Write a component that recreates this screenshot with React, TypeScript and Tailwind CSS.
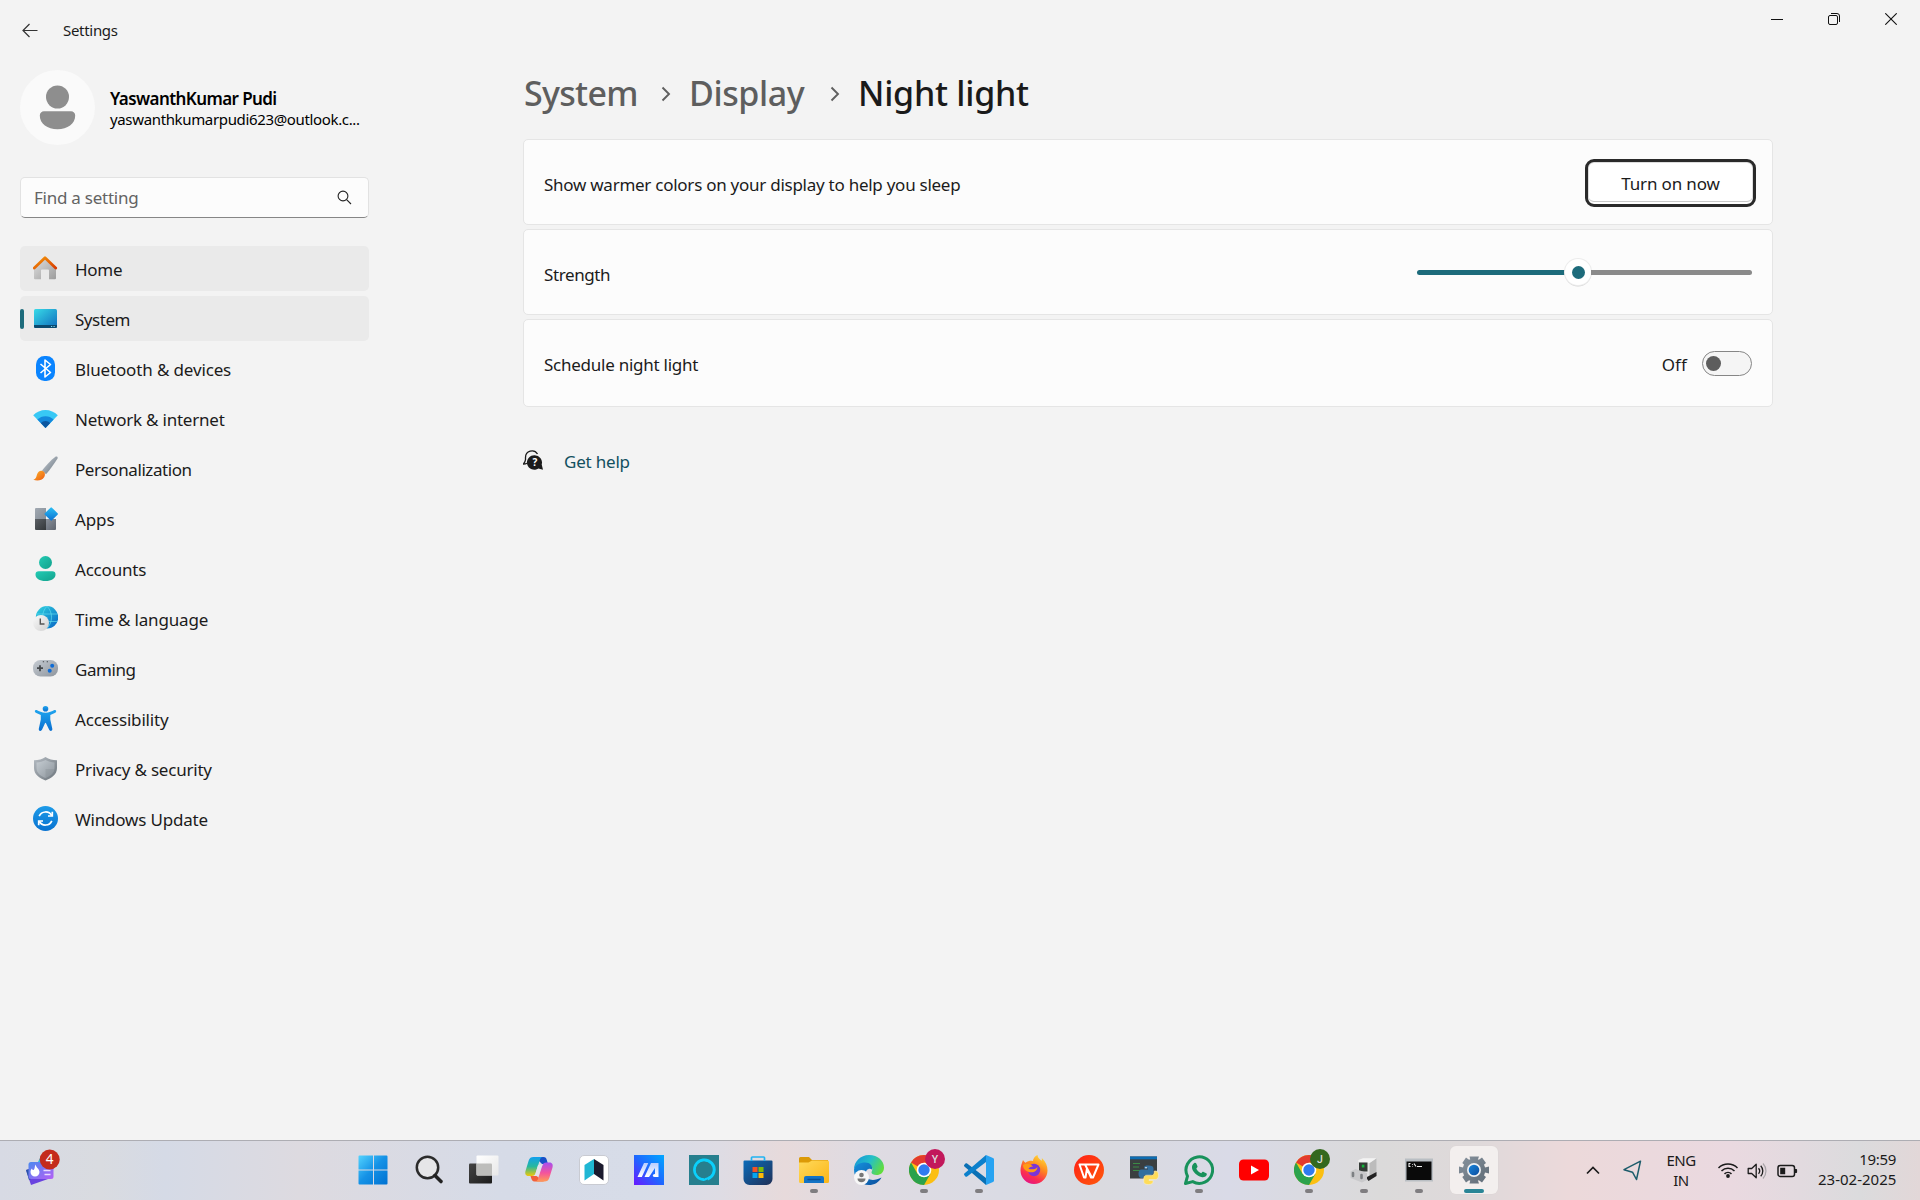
import type { ReactNode } from "react";

function Svg({ w = 25, h = 25, children, className = "" }: { w?: number; h?: number; children: ReactNode; className?: string }) {
  return (
    <svg width={w} height={h} viewBox={`0 0 ${w} ${h}`} fill="none" className={`shrink-0 ${className}`}>
      {children}
    </svg>
  );
}

function Gradient({ id, from, to, x2 = 1, y2 = 1 }: { id: string; from: string; to: string; x2?: number; y2?: number }) {
  return (
    <linearGradient id={id} x1="0" y1="0" x2={x2} y2={y2}>
      <stop stopColor={from} />
      <stop offset="1" stopColor={to} />
    </linearGradient>
  );
}

/* ---------- Navigation icons, all on a 25 x 25 grid ---------- */

const HomeIcon = () => (
  <Svg>
    <defs>
      <Gradient id="homeWall" from="#e0e0e0" to="#9c9c9c" />
      <Gradient id="homeRoof" from="#f59a0b" to="#d83b01" />
    </defs>
    <path d="M1 11.500 12 2l11 9.500V22.300a1 1 0 0 1-1 1h-6V14.500a1 1 0 0 0-1-1H9a1 1 0 0 0-1 1v8.800H2a1 1 0 0 1-1-1Z" fill="url(#homeWall)" />
    <path d="M1.300 12 12 1.700 22.700 12" stroke="url(#homeRoof)" strokeWidth="2.800" strokeLinecap="round" strokeLinejoin="round" />
  </Svg>
);

const SystemIcon = () => (
  <Svg>
    <defs><Gradient id="sys" from="#38dbe8" to="#0f6cbd" /></defs>
    <rect x="1" y="3" width="23" height="19" rx="1.500" fill="url(#sys)" />
    <path d="M1 19h23v1.500a1.500 1.500 0 0 1-1.500 1.500h-20A1.500 1.500 0 0 1 1 20.500Z" fill="#0b4a6f" />
    <path d="M18 20.500h1.200M20.500 20.500h1.200" stroke="#7fd6ef" strokeWidth="1" />
  </Svg>
);

const BluetoothIcon = () => (
  <Svg>
    <rect x="3" y="0" width="19" height="25" rx="8.500" fill="#0a84ff" />
    <path d="m7.500 8 10 8.500-5.500 4.500V4l5.500 4.500-10 8.500" stroke="#fff" strokeWidth="1.600" strokeLinejoin="round" />
  </Svg>
);

const NetworkIcon = () => (
  <Svg>
    <path d="M12.500 22 .2 9.200a17.400 17.400 0 0 1 24.600 0Z" fill="#38c8f5" />
    <path d="M12.500 22 4.400 13.500a11.500 11.500 0 0 1 16.200 0Z" fill="#1488dc" />
    <path d="M12.500 22 7.800 17.100a6.500 6.500 0 0 1 9.400 0Z" fill="#0b569f" />
  </Svg>
);

const BrushIcon = () => (
  <Svg>
    <defs>
      <Gradient id="handle" from="#c9d0d8" to="#66717b" />
      <Gradient id="bristle" from="#fcb52b" to="#ed5a12" />
    </defs>
    <path d="M9 14.500C13 9.500 18 4 22.400.700c1.500-.9 2.900.4 2 2C21 8 17 13.500 13 18.300Z" fill="url(#handle)" />
    <path d="M.3 23.800C3 22.800 3.300 21 4 18.500c.9-2.700 3-4.200 5.500-3.500 2.700.8 3 4 1.600 6.300C9 25 3.500 25.200.3 23.800Z" fill="url(#bristle)" />
  </Svg>
);

const AppsIcon = () => (
  <Svg>
    <defs>
      <Gradient id="appA" from="#a1a9b2" to="#858d96" />
      <Gradient id="appB" from="#5b6065" to="#33373a" />
      <Gradient id="appC" from="#8a919b" to="#5f656f" />
      <Gradient id="appD" from="#2bc0f5" to="#0a6fd0" />
    </defs>
    <path d="M2 3a1 1 0 0 1 1-1h10v11H2Z" fill="url(#appA)" />
    <path d="M2 13h11v11H3a1 1 0 0 1-1-1Z" fill="url(#appB)" />
    <path d="M13 13h10v10a1 1 0 0 1-1 1h-9Z" fill="url(#appC)" />
    <rect x="13.200" y="3" width="10" height="10" rx="1" transform="rotate(45 18.200 8)" fill="url(#appD)" />
  </Svg>
);

const AccountsIcon = () => (
  <Svg>
    <defs><Gradient id="acc" from="#23cbb4" to="#12a18c" /></defs>
    <circle cx="12.500" cy="6.500" r="6.500" fill="url(#acc)" />
    <path d="M2.500 18.500a3.300 3.300 0 0 1 3.300-3.300h13.400a3.300 3.300 0 0 1 3.300 3.300c0 4-4 6.500-10 6.500s-10-2.500-10-6.500Z" fill="url(#acc)" />
  </Svg>
);

const TimeIcon = () => (
  <Svg>
    <defs>
      <Gradient id="globe" from="#31d5e0" to="#0763c4" />
      <Gradient id="clock" from="#fafafa" to="#d0d0d0" />
    </defs>
    <circle cx="14" cy="11.300" r="11.200" fill="url(#globe)" />
    <path d="M3.500 8h21M3.500 15.500h21M14 .2c-6 6-6 16 0 22.200M14 .2c6 6 6 16 0 22.200" stroke="#65dff0" strokeWidth="1" opacity=".65" />
    <circle cx="8" cy="17" r="8" fill="url(#clock)" />
    <path d="M7.300 12.500V18H11.500" stroke="#555" strokeWidth="1.400" />
  </Svg>
);

const GamingIcon = () => (
  <Svg>
    <defs><Gradient id="pad" from="#c6ccd3" to="#8e959d" /></defs>
    <rect x="0" y="4" width="25" height="16.500" rx="7.500" fill="url(#pad)" />
    <path d="M7 9.200v6M4 12.200h6" stroke="#44484c" strokeWidth="1.800" />
    <circle cx="19.200" cy="9.700" r="2" fill="#0f6cd6" />
    <circle cx="16.700" cy="14.700" r="2" fill="#0f6cd6" />
    <path d="M9.800 5.700h1.300M13.700 5.700H15" stroke="#44484c" strokeWidth="1.100" />
  </Svg>
);

const AccessibilityIcon = () => (
  <Svg>
    <defs><Gradient id="man" from="#1fa4ee" to="#0a6fd0" x2={0} /></defs>
    <g fill="url(#man)">
      <circle cx="12.500" cy="2.800" r="2.800" />
      <path d="M3.700 4c2.300 1.200 5.300 2.800 8.800 2.800S19 5.200 21.300 4c1.800-.6 2.700 1.700 1 2.700L17.300 9v4.500l2 9.300c.4 2.200-2.300 3-3.100 1L13 17.200c-.3-.7-.8-.7-1 0l-3 6.600c-.9 2-3.500 1.200-3.200-1l2-9.300V9L2.800 6.700C1 5.700 1.900 3.400 3.700 4Z" />
    </g>
  </Svg>
);

const ShieldIcon = () => (
  <Svg>
    <defs>
      <Gradient id="shOut" from="#b5bcc3" to="#6c747b" />
      <Gradient id="shIn" from="#c5ccd2" to="#8d959c" />
    </defs>
    <path d="M12.500 1c3.500 2.500 7 3 11.500 3.200V12c0 6.500-5.500 10.300-11.500 12.500C6.500 22.300 1 18.500 1 12V4.200C5.500 4 9 3.500 12.500 1Z" fill="url(#shOut)" />
    <path d="M12.500 4c3 1.700 5.700 2.200 9 2.400V12c0 5-4 8-9 10-5-2-9-5-9-10V6.400c3.300-.2 6-.7 9-2.400Z" fill="url(#shIn)" />
    <path d="M12.500 4v9h9c-.5 4.500-4.200 7.200-9 9Z" fill="#6d767e" opacity=".2" />
  </Svg>
);

const UpdateIcon = () => (
  <Svg>
    <defs><Gradient id="upd" from="#1d9be8" to="#0872d0" x2={0} /></defs>
    <circle cx="12.500" cy="12.500" r="12.500" fill="url(#upd)" />
    <path d="M6.200 10.200a7 7 0 0 1 12.500-.7M18.800 14.800a7 7 0 0 1-12.500.7" stroke="#fff" strokeWidth="1.700" />
    <path d="M19.300 5.700v4.300h-4.300M5.700 19.300v-4.300h4.300" stroke="#fff" strokeWidth="1.700" />
  </Svg>
);

const nav: { label: string; icon: ReactNode; tracking: string; filled?: boolean; active?: boolean }[] = [
  { label: "Home", icon: <HomeIcon />, tracking: "tracking-[-0.3px]", filled: true },
  { label: "System", icon: <SystemIcon />, tracking: "tracking-[-0.47px]", filled: true, active: true },
  { label: "Bluetooth & devices", icon: <BluetoothIcon />, tracking: "tracking-[-0.14px]" },
  { label: "Network & internet", icon: <NetworkIcon />, tracking: "tracking-[-0.22px]" },
  { label: "Personalization", icon: <BrushIcon />, tracking: "tracking-[-0.42px]" },
  { label: "Apps", icon: <AppsIcon />, tracking: "tracking-[-0.1px]" },
  { label: "Accounts", icon: <AccountsIcon />, tracking: "tracking-[-0.2px]" },
  { label: "Time & language", icon: <TimeIcon />, tracking: "tracking-[-0.16px]" },
  { label: "Gaming", icon: <GamingIcon />, tracking: "tracking-[-0.45px]" },
  { label: "Accessibility", icon: <AccessibilityIcon />, tracking: "tracking-[-0.19px]" },
  { label: "Privacy & security", icon: <ShieldIcon />, tracking: "tracking-[-0.21px]" },
  { label: "Windows Update", icon: <UpdateIcon />, tracking: "tracking-[-0.2px]" },
];

function Sidebar() {
  return (
    <aside className="w-[349px] shrink-0">
      <div className="flex h-[75px] items-center gap-[15px]">
        <Svg w={75} h={75}>
          <circle cx="37.500" cy="37.500" r="37.500" fill="#fafafa" />
          <circle cx="37.500" cy="27" r="11.500" fill="#8e8e8e" />
          <path d="M19.800 45.500a4.200 4.200 0 0 1 4.200-4.200h27a4.200 4.200 0 0 1 4.200 4.200c0 8.500-7.700 13.700-17.700 13.700s-17.700-5.200-17.700-13.700Z" fill="#8e8e8e" />
        </Svg>
        <div className="whitespace-nowrap text-black">
          <div className="pt-px text-[17px] leading-[21px] font-semibold tracking-[-0.58px]">YaswanthKumar Pudi</div>
          <div className="text-[15px] leading-5 tracking-[-0.35px]">yaswanthkumarpudi623@outlook.c...</div>
        </div>
      </div>
      <div className="mt-8 flex h-[41px] items-center justify-between rounded-[5px] border border-b-[1.5px] border-[#e2e2e2] border-b-[#868686] bg-[#fcfcfc] pr-[16px] pl-[13px]">
        <span className="text-[17px] tracking-[-0.25px] text-[#636363]">Find a setting</span>
        <Svg w={15} h={15}>
          <circle cx="6" cy="6" r="4.900" stroke="#222" strokeWidth="1.100" />
          <path d="m9.600 9.600 4.400 4.400" stroke="#222" strokeWidth="1.100" />
        </Svg>
      </div>
      <nav className="mt-7 flex flex-col gap-[5px]">
        {nav.map((n) => (
          <div key={n.label} className={`flex h-[45px] items-center rounded-[5px] ${n.filled ? "bg-[#eaeaea]" : ""}`}>
            <span className={`h-5 w-1 rounded-full ${n.active ? "bg-[#1d6b7b]" : ""}`} />
            <span className="ml-[9px] w-[42px]">{n.icon}</span>
            <span className={`pt-0.5 text-[17px] whitespace-nowrap ${n.tracking}`}>{n.label}</span>
          </div>
        ))}
      </nav>
    </aside>
  );
}

function Chevron() {
  return (
    <Svg w={10} h={16} className="mt-0.5">
      <path d="m1.500 1.500 6.500 6.500-6.500 6.500" stroke="#5f5f5f" strokeWidth="1.900" />
    </Svg>
  );
}

function Content() {
  return (
    <main className="ml-[154px] w-[1250px]">
      <h1 className="flex h-[68px] items-center pb-6 text-[34px] leading-[44px] font-medium whitespace-nowrap text-[#5e5e5e]">
        <span className="w-[138px] pl-px tracking-[-0.7px]">System</span>
        <Chevron />
        <span className="w-[159px] pl-[18px] tracking-[-0.4px]">Display</span>
        <Chevron />
        <span className="pl-[18px] tracking-[-0.25px] text-[#1a1a1a]">Night light</span>
      </h1>
      <div className="flex flex-col gap-1 text-[17px]">
        <section className="flex h-[86px] items-center justify-between rounded-[5px] border border-[#e5e5e5] bg-[#fcfcfc] pr-4 pl-5">
          <span className="pt-1.5 tracking-[-0.26px]">Show warmer colors on your display to help you sleep</span>
          <button className="mt-0.5 h-12 w-[171px] rounded-[9px] border-[3px] border-[#2a2a2a] bg-white pt-px tracking-[-0.15px] shadow-[inset_0_-2px_0_#fff,inset_0_-3px_0_#c9c9c9,inset_0_1px_0_#ddd,inset_1px_0_0_#ddd,inset_-1px_0_0_#ddd]">
            Turn on now
          </button>
        </section>
        <section className="flex h-[86px] items-center justify-between rounded-[5px] border border-[#e5e5e5] bg-[#fcfcfc] pr-5 pl-5">
          <span className="pt-[5px] tracking-[-0.4px]">Strength</span>
          <div className="flex w-[335px] items-center">
            <span className="h-[5px] w-[148px] rounded-l-full bg-[#1d6b7b]" />
            <span className="flex size-[26px] items-center justify-center rounded-full bg-white shadow-[0_0_0_1px_#ececec,0_1px_0_0.5px_#d4d4d4]">
              <span className="size-[13px] rounded-full bg-[#1d6b7b]" />
            </span>
            <span className="h-[5px] flex-1 rounded-r-full bg-[#8a8a8a]" />
          </div>
        </section>
        <section className="flex h-[88px] items-center justify-between rounded-[5px] border border-[#e5e5e5] bg-[#fcfcfc] pr-5 pl-5">
          <span className="pt-1 tracking-[-0.25px]">Schedule night light</span>
          <div className="flex items-center">
            <span className="mr-[15px] pt-1 tracking-[0.1px]">Off</span>
            <span className="flex h-[25px] w-[50px] items-center rounded-full border border-[#868686] bg-[#f5f5f5] pl-[3px]">
              <span className="size-[15px] rounded-full bg-[#5d5d5d]" />
            </span>
          </div>
        </section>
      </div>
      <div className="mt-10 flex items-center text-[17px]">
        <Svg w={41} h={24}>
          <path d="M2.500 11V8.500a6.500 6.500 0 0 1 12-3.500M2.500 10.500c0 1.500-1 3-2 4.500 1.300 0 2.500-.2 3.500-.8" stroke="#1b1b1b" strokeWidth="1.300" />
          <path d="M11.700 6.200a7.300 7.300 0 0 1 7 9.400l1.300 5.100-4.600-1.200a7.300 7.300 0 1 1-3.700-13.300Z" fill="#1b1b1b" />
          <text x="11.900" y="17.200" fontSize="10" fontWeight="700" fill="#fff" textAnchor="middle">?</text>
        </Svg>
        <span className="pt-0.5 tracking-[-0.2px] text-[#12505f]">Get help</span>
      </div>
    </main>
  );
}

/* ---------- Taskbar ---------- */

const StartIcon = () => (
  <Svg w={30} h={30} className="-ml-[2px]">
    <defs><linearGradient id="win" x1="0" y1="0" x2="29" y2="29" gradientUnits="userSpaceOnUse"><stop stopColor="#55d5ff" /><stop offset=".5" stopColor="#1592e6" /><stop offset="1" stopColor="#0072d2" /></linearGradient></defs>
    <path d="M1.500.5H15v14H.5v-13a1 1 0 0 1 1-1ZM16 .5h12.500a1 1 0 0 1 1 1v13H16ZM.5 15.500H15v14H1.500a1 1 0 0 1-1-1ZM16 15.500h13.500v13a1 1 0 0 1-1 1H16Z" fill="url(#win)" />
  </Svg>
);
const SearchIcon = () => (
  <Svg w={30} h={30}>
    <circle cx="13.500" cy="12.500" r="10.700" fill="#e6e6e8" stroke="#2b2b2b" strokeWidth="2.500" />
    <path d="m21 20.500 6 6" stroke="#222" strokeWidth="3.600" strokeLinecap="round" />
  </Svg>
);
const TaskViewIcon = () => (
  <Svg w={30} h={30}>
    <defs><Gradient id="tvd" from="#444" to="#1c1c1c" /><Gradient id="tvl" from="#fff" to="#e8e8e8" /></defs>
    <rect x="0" y="8.500" width="23" height="20" rx="1" fill="url(#tvd)" />
    <rect x="7.500" y=".5" width="22" height="20" rx="1" fill="url(#tvl)" />
    <path d="M7.500 8.500H22a1 1 0 0 1 1 1v11H8.500a1 1 0 0 1-1-1Z" fill="#bdbdbb" />
  </Svg>
);
const CopilotIcon = () => (
  <Svg w={30} h={30}>
    <defs>
      <linearGradient id="cpl" x1="0" y1="0" x2="0" y2="1"><stop stopColor="#11a0ee" /><stop offset=".5" stopColor="#27b89e" /><stop offset="1" stopColor="#f0c808" /></linearGradient>
      <linearGradient id="cpr" x1="0" y1="0" x2="0" y2="1"><stop stopColor="#a64ff0" /><stop offset=".55" stopColor="#f4549c" /><stop offset="1" stopColor="#ff9a55" /></linearGradient>
    </defs>
    <path d="M10 2h9.500c2 0 2.800 1.300 3.300 3l1.200 4h-6l-4-4Z" fill="#1850c8" />
    <path d="M20 26.500H10.500c-2 0-2.700-1.500-3.200-3L6.500 21h6l4 3Z" fill="#f2603b" />
    <path d="M9.500 2H19c-2 0-2.700 1.500-3.300 3.500l-3.900 12c-.8 2.700-2 3.500-4 3.500H4.500C1.500 21 .8 18.500 1.500 16L4.700 5.500C5.500 3 7 2 9.500 2Z" fill="url(#cpl)" />
    <path d="M20.500 26.500H11c2 0 2.700-1.500 3.300-3.500l3.900-12c.8-2.700 2-3.500 4-3.500h3.300c3 0 3.700 2.500 3 5L25.300 23c-.8 2.500-2.300 3.500-4.800 3.500Z" fill="url(#cpr)" />
    <path d="m14 10-2.500 8.500c-.4 1.500-1 2.500-2 2.500h5l2.500-8c.5-1.800 1.300-3.500 3-3.500Z" fill="#e4e1ec" />
  </Svg>
);
const BookIcon = () => (
  <Svg w={30} h={30}>
    <rect x=".5" y=".5" width="29" height="29" rx="4.500" fill="#fff" stroke="#c9cbd2" />
    <path d="m15 4-9.500 6v15.500L15 19Z" fill="#20b7d4" />
    <path d="m15 4 9.500 6v15.500L15 19Z" fill="#1b1a2e" />
  </Svg>
);
const MyAsusIcon = () => (
  <Svg w={30} h={30}>
    <defs>
      <linearGradient id="asus" x1="0" y1="1" x2="1" y2="0"><stop stopColor="#6a17ff" /><stop offset=".5" stopColor="#1e68ff" /><stop offset="1" stopColor="#00a8ff" /></linearGradient>
      <linearGradient id="asusM" x1="0" y1="1" x2="0" y2="0"><stop stopColor="#fff" /><stop offset="1" stopColor="#b9cdff" /></linearGradient>
    </defs>
    <path d="M0 0h30v30H0Z" fill="url(#asus)" />
    <path d="M3.500 22 10 8h4.300L7.800 22ZM10.500 22 17 8h7.500v14H21V13L15 22Z" fill="url(#asusM)" />
    <circle cx="20.500" cy="20.500" r="1.600" fill="#fff" />
  </Svg>
);
const AlexaIcon = () => (
  <Svg w={30} h={30}>
    <path d="M0 0h30v30H0Z" fill="#267f8e" />
    <path d="M15 24.500A9.800 9.800 0 1 1 18.500 24" stroke="#0bd0fb" strokeWidth="3" />
    <path d="M13.500 26c3 0 6-2 8.500-4.500L18 20Z" fill="#0bd0fb" />
    <circle cx="15" cy="15" r="8.200" fill="#267f8e" />
  </Svg>
);
const StoreIcon = () => (
  <Svg w={30} h={30} className="mr-px">
    <defs><Gradient id="store" from="#0b6cba" to="#203057" /></defs>
    <path d="M.5 6.500a1 1 0 0 1 1-1h27a1 1 0 0 1 1 1V24a6 6 0 0 1-6 6h-17a6 6 0 0 1-6-6Z" fill="url(#store)" />
    <path d="M9.500 12h5v5h-5Z" fill="#f35325" /><path d="M15.500 12h5v5h-5Z" fill="#81bc06" />
    <path d="M9.500 18h5v5h-5Z" fill="#05a6f0" /><path d="M15.500 18h5v5h-5Z" fill="#ffba08" />
    <path d="M8.500 6V2.800a.8.8 0 0 1 .8-.8h11.400a.8.8 0 0 1 .8.8V6" stroke="#22b4f2" strokeWidth="1.700" />
  </Svg>
);
const FolderIcon = () => (
  <Svg w={30} h={30}>
    <defs><Gradient id="fold" from="#ffda5c" to="#fbb516" /></defs>
    <path d="M0 3.500A1.500 1.500 0 0 1 1.500 2H10l3 3h16v5H0Z" fill="#dc9a07" />
    <path d="M0 7.500h9.500L13 5.500h15.500A1.500 1.500 0 0 1 30 7v19.500a1.500 1.500 0 0 1-1.500 1.500h-27A1.500 1.500 0 0 1 0 26.500Z" fill="url(#fold)" />
    <path d="M5 28v-5a2 2 0 0 1 2-2h16a2 2 0 0 1 2 2v5Z" fill="#1473c5" />
    <path d="M9 24.500h12" stroke="#0b4f94" strokeWidth="1.300" strokeLinecap="round" />
  </Svg>
);
const EdgeIcon = () => (
  <Svg w={30} h={30}>
    <defs>
      <linearGradient id="edgeA" x1="0" y1=".2" x2="1" y2=".6"><stop stopColor="#1596d8" /><stop offset=".5" stopColor="#25bfc8" /><stop offset="1" stopColor="#62dd3c" /></linearGradient>
      <Gradient id="edgeB" from="#1590dc" to="#0b4f9e" />
    </defs>
    <path d="M15 0c9 0 15 6 15 12.500 0 5-3.500 7.500-7.500 7.500-3 0-5-1-5-2.500 0-1 .8-1.500.8-3.500 0-3-3-5.500-7-5.500C6 8.500 1.500 11 0 14.500 0 6.500 6.500 0 15 0Z" fill="url(#edgeA)" />
    <path d="M0 14.500C1 10 6 7.500 11.300 7.500c4.700 0 7.700 3.500 6.700 7-3-2-6.500.5-6.500 4.500 0 6 8 8 16 3.500C25 27.500 20 30 15 30 6.500 30 0 23.500 0 14.500Z" fill="url(#edgeB)" />
    <circle cx="7.500" cy="22.500" r="7.500" fill="#f7f7f7" />
    <circle cx="7.500" cy="20" r="2.300" fill="#777" /><path d="M3.500 23.500h8c0 2.500-1.700 3.800-4 3.800s-4-1.300-4-3.800Z" fill="#777" />
  </Svg>
);
const ChromeIcon = ({ letter, color }: { letter: string; color: string }) => (
  <svg width="36" height="36" viewBox="0 0 36 36" className="ml-1.5 shrink-0">
    <circle cx="15" cy="21" r="15" fill="#fbbf12" />
    <path d="M15 21 2 13.500A15 15 0 0 1 28 13.500H15Z" fill="#e33b2e" />
    <path d="M2 13.500A15 15 0 0 0 15 36l6.500-11.300L15 21 8.500 24.800Z" fill="#2ba24c" />
    <circle cx="15" cy="21" r="7.300" fill="#fff" />
    <circle cx="15" cy="21" r="5.700" fill="#2f7bf0" />
    <circle cx="26" cy="10" r="10" fill={color} />
    <text x="26" y="13.700" fontSize="10.500" fontFamily="Roboto" fontWeight="500" textAnchor="middle" fill="#dedede">{letter}</text>
  </svg>
);
const CodeIcon = () => (
  <Svg w={30} h={30}>
    <path d="M2.800 8.300 22 23v7L.4 11.500a1.200 1.200 0 0 1 0-1.700l1-1.200a1.200 1.200 0 0 1 1.400-.3Z" fill="#0a70b5" />
    <path d="M2.800 21.700 22 7V0L.4 18.500a1.200 1.200 0 0 0 0 1.700l1 1.200a1.200 1.200 0 0 0 1.400.3Z" fill="#0c80cc" />
    <path d="m22 0 7 3a1.500 1.500 0 0 1 1 1.300v21.400A1.500 1.500 0 0 1 29 27l-7 3Z" fill="#27a3f2" />
  </Svg>
);
const FirefoxIcon = () => (
  <Svg w={30} h={30}>
    <defs><linearGradient id="ff" x1=".8" y1="0" x2=".3" y2="1"><stop stopColor="#ffe03a" /><stop offset=".4" stopColor="#ff8a1e" /><stop offset=".75" stopColor="#fb2d50" /><stop offset="1" stopColor="#e31587" /></linearGradient></defs>
    <path d="M4 5c.6 1.300 1.500 2 2.600 2.700C9 6 11.500 5.500 14 6c0-2.500 2-5 4.500-6 .2 3 2 4 4 5.800.5-.8.5-1.800.3-2.800C27 7 28.500 11 28.500 15.500 28.500 23 22.500 29 15 29S1.500 23 1.500 15.500C1.500 11.500 2.800 8.500 4 5Z" fill="url(#ff)" />
    <circle cx="15" cy="15" r="6.200" fill="#7a35d8" />
    <path d="M4 10c3.500-2.500 8-1 10 1.500-2.500 0-4 1-4.500 2.500 1.300 0 3 .5 5 .2 2 0 3-1 4-2.200-.3 4-3 5-5.500 5.300-5 .2-9-3-9-7.300Z" fill="#ff9a16" />
  </Svg>
);
const WpsIcon = () => (
  <Svg w={30} h={30}>
    <defs><Gradient id="wps" from="#ff2016" to="#ff5a0b" /></defs>
    <circle cx="15" cy="15" r="15" fill="url(#wps)" />
    <path d="M5.500 9.500H24.500L19 22.500h-2L13 13.500 11.500 22.500H10ZM11 9.500l6.500 12.500" stroke="#fff" strokeWidth="2" strokeLinejoin="round" />
  </Svg>
);
const PythonIcon = () => (
  <Svg w={30} h={30}>
    <path d="M1 1.500h27v22H1Z" fill="#3a3f40" /><path d="M1 1.500h27v2.800H1Z" fill="#0e6db2" />
    <path d="M4 8.500h7M4 12h6M4 15.500h8" stroke="#3b8b45" strokeWidth="1" />
    <path d="M19.500 10.500c3.500 0 5 1 5 3v3.500c0 2-1.500 3-3.500 3h-4c-2 0-3 1-3 3h-1.500c-2 0-3-2-3-4.300s1-4.200 3-4.200H19v-1h-4v-1c0-1.500 1.500-2 4.500-2Z" fill="#336f9f" />
    <path d="M19.500 29.500c-3.500 0-4.700-1-4.700-3V23c0-2 1.200-2.800 3.200-2.800h4.500c2 0 2.800-1 2.800-4.200h1.400c2 0 2.800 2 2.800 4.300s-1 4.200-2.800 4.200H20v1h4v1.300c0 1.700-1.500 2.700-4.500 2.700Z" fill="#ffdc59" stroke="#f5f0d0" strokeWidth=".6" />
    <circle cx="17" cy="12.700" r=".8" fill="#fff" />
  </Svg>
);
const WhatsAppIcon = () => (
  <Svg w={30} h={30}>
    <path d="m1.500 28.500 2-7.300A13.300 13.300 0 1 1 8.700 26.600Z" stroke="#18925b" strokeWidth="3" strokeLinejoin="round" />
    <path d="M10.300 8c.8-.4 1.700-.2 2 .6l1.200 2.700c.2.700-.2 1.200-1.200 2.400 1.200 2.300 2.800 3.600 5 4.600 1.200-1.600 1.500-1.700 2.300-1.400l2.700 1.300c.8.4.6 1.300.1 2.400-1 1.700-3.200 2-5 1.500-4.500-1.300-8.300-5-9.300-8.700-.5-2 .5-4.500 2.200-5.400Z" fill="#18925b" />
  </Svg>
);
const YouTubeIcon = () => (
  <Svg w={30} h={30}>
    <rect y="4.500" width="30" height="21" rx="4.500" fill="#f00" />
    <path d="m12 10.500 8 4.500-8 4.500Z" fill="#fff" />
  </Svg>
);
const DeviceIcon = () => (
  <Svg w={30} h={30}>
    <path d="m9.500 5 4.500-1.800h13.500V20L20 25l-10.500-6Z" fill="#e1e1e1" />
    <path d="m20.500 8 7-4.800V21l-7 3.500Z" fill="#bcbcbc" />
    <path d="M20.500 8 9.500 7V5L14 3.200h13.500Z" fill="#f3f3f3" />
    <path d="M10 7.500h8.500v9H10Z" fill="#353b37" /><path d="M12.800 9.700h2.600v2.800h-2.600Z" fill="#14b53a" />
    <path d="M17 22.500 27.500 17v4L19.500 26Z" fill="#222" />
    <path d="m1.500 16.500 5-2.500 11.500 4v7l-5 2.500L1.500 23Z" fill="#c9c9cb" />
    <path d="M4 18v3M12.500 20v3" stroke="#7d8083" strokeWidth="2.600" strokeLinecap="round" />
  </Svg>
);
const TerminalIcon = () => (
  <Svg w={30} h={30}>
    <path d="M1 3.500h28v23H1Z" fill="#b9bec3" /><path d="M2.500 6.500h25V25h-25Z" fill="#0a0a0a" />
    <path d="M6.500 8.500H5v3h1.500M8.500 9v.8M8.500 11v.5M10 8.500l2 3M13 11.500h5" stroke="#eee" strokeWidth="1.100" />
  </Svg>
);
const GearIcon = () => (
  <Svg w={30} h={30}>
    <defs><Gradient id="gear" from="#87929d" to="#5f6b76" /><Gradient id="gearDot" from="#1885da" to="#0b4ea0" /></defs>
    <g fill="url(#gear)">
      <circle cx="15" cy="15" r="11.300" />
      <path d="m11.500 5.500-1-4 9.500 0-1.500 4ZM11.500 24.500l-1 4H20l-1.500-4ZM4 17.500 0 18.500v-7l4 1ZM26 17.500l4 1v-7l-4 1ZM6.500 11 3.300 8 7 2.500l4 3ZM23.500 11 27 8l-4-5.500-4.500 3.200ZM6.500 19l-3.200 3L7 27.500l4-3ZM23.500 19l3.500 3-4 5.500-4.500-3.200Z" />
    </g>
    <circle cx="15" cy="15" r="7" fill="#eef1f4" /><circle cx="15" cy="15" r="5.300" fill="url(#gearDot)" />
  </Svg>
);

const apps: { name: string; icon: ReactNode; running?: boolean; current?: boolean }[] = [
  { name: "start", icon: <StartIcon /> },
  { name: "search", icon: <SearchIcon /> },
  { name: "taskview", icon: <TaskViewIcon /> },
  { name: "copilot", icon: <CopilotIcon /> },
  { name: "book", icon: <BookIcon /> },
  { name: "myasus", icon: <MyAsusIcon /> },
  { name: "alexa", icon: <AlexaIcon /> },
  { name: "store", icon: <StoreIcon /> },
  { name: "explorer", icon: <FolderIcon />, running: true },
  { name: "edge", icon: <EdgeIcon /> },
  { name: "chrome-y", icon: <ChromeIcon letter="Y" color="#c2185b" />, running: true },
  { name: "vscode", icon: <CodeIcon />, running: true },
  { name: "firefox", icon: <FirefoxIcon /> },
  { name: "wps", icon: <WpsIcon /> },
  { name: "python", icon: <PythonIcon /> },
  { name: "whatsapp", icon: <WhatsAppIcon />, running: true },
  { name: "youtube", icon: <YouTubeIcon /> },
  { name: "chrome-j", icon: <ChromeIcon letter="J" color="#33691e" />, running: true },
  { name: "device", icon: <DeviceIcon />, running: true },
  { name: "terminal", icon: <TerminalIcon />, running: true },
  { name: "settings", icon: <GearIcon />, running: true, current: true },
];

function Taskbar() {
  return (
    <footer className="flex h-[60px] shrink-0 border-t border-[#adadb3] bg-[linear-gradient(90deg,#d7dae4_0px,#d9dbe0_100px,#d5dae6_165px,#dddae0_300px,#d6dbe7_500px,#d7dce8_640px,#dedce4_720px,#e7dadb_785px,#dfdbe2_860px,#dadbe4_1000px,#dadadf_1100px,#d9dae7_1230px,#dbdada_1380px,#dfd9da_1480px,#ecd9da_1570px,#ead9e0_1730px,#e2dadf_1800px,#dbdbdd_1860px,#e2d7d8_1920px)]">
      <div className="flex w-[346px] items-center pl-[26px]">
        <svg width="36" height="38" viewBox="0 0 36 38" className="mb-[6px]">
          <defs><Gradient id="cardA" from="#4b8af0" to="#b45ff5" /></defs>
          <path d="m0 21 19-5 3 14-17 6Z" fill="#6a43e0" /><path d="m0 21 3-1 2 10-2 1Z" fill="#2a55a8" />
          <path d="m12 13 3-6 8 0v8Z" fill="#25c1d8" />
          <rect x="2.500" y="13" width="25" height="17" rx="2.500" fill="url(#cardA)" />
          <path d="M9.500 15.500c.5 3 4 4.500 4 7.500a4.500 4.500 0 0 1-9 0c0-1.500.5-2.500 1.500-3.500.3 1 .7 1.500 1.500 1.500 1.500-1 1-3.500 2-5.500Z" fill="#fff" />
          <path d="M17.500 21.500h7M18.500 25.500h6" stroke="#e8dcfd" strokeWidth="1.600" />
          <circle cx="23.700" cy="10.500" r="10" fill="#c42b1c" />
          <text x="23.500" y="15.300" fontSize="13.500" fontFamily="Noto Sans" textAnchor="middle" fill="#fff">4</text>
        </svg>
      </div>
      <div className="flex">
        {apps.map((a) => (
          <div key={a.name} className="flex w-[55px] justify-center pt-[5px]">
            <div className={`flex h-12 w-12 flex-col items-center rounded-md ${a.current ? "bg-[#f3efee] shadow-[0_0_0_0.5px_#dcd6d6]" : ""}`}>
              <div className="flex h-[39px] shrink-0 items-end">{a.icon}</div>
              <span className={`mt-1 h-1 rounded-full ${a.current ? "w-5 bg-[#2a8596]" : "w-2"} ${a.running && !a.current ? "bg-[#7f7d80]" : ""}`} />
            </div>
          </div>
        ))}
      </div>
      <div className="flex flex-1 items-center justify-end pr-6 text-[15px] leading-5 text-[#1b1b1b]">
        <Svg w={14} h={9}><path d="m1 7.500 6-6 6 6" stroke="#1b1b1b" strokeWidth="1.700" /></Svg>
        <Svg w={20} h={22} className="ml-[23px]"><path d="M1 9.700 17.500 1.200 13.500 19.500l-4-7.300Z" stroke="#1d5c6b" strokeWidth="1.500" strokeLinejoin="round" /></Svg>
        <div className="mr-[21px] mb-0.5 ml-[23px] w-[30px] text-center tracking-[-0.5px]">ENG<br />IN</div>
        <Svg w={22} h={18} className="mb-0.5">
          <path d="M1.500 7a13.500 13.500 0 0 1 19 0M4.500 10a9.300 9.300 0 0 1 13 0M7.500 12.900a5 5 0 0 1 7 0" stroke="#1b1b1b" strokeWidth="1.500" />
          <circle cx="11" cy="15" r="1.900" fill="#1b1b1b" />
        </Svg>
        <Svg w={22} h={18} className="ml-2">
          <path d="M1.200 6.500h3.500l4.500-4.300v13.600L4.700 11.500H1.200Z" stroke="#1b1b1b" strokeWidth="1.300" strokeLinejoin="round" />
          <path d="M11.500 6.300a4 4 0 0 1 0 5.400M13.700 3.800a7.500 7.500 0 0 1 0 10.400" stroke="#1b1b1b" strokeWidth="1.300" />
          <path d="M16 1.500a11 11 0 0 1 0 15" stroke="#a9a4a8" strokeWidth="1.200" />
        </Svg>
        <Svg w={22} h={14} className="ml-2">
          <rect x="1" y="1.500" width="16.500" height="11" rx="2.300" stroke="#1b1b1b" strokeWidth="1.500" />
          <path d="M3.200 3.700h5v6.600h-5ZM18 5h1.300a.8.8 0 0 1 .8.800v2.400a.8.8 0 0 1-.8.800H18Z" fill="#1b1b1b" />
        </Svg>
        <div className="mb-1 ml-[19px] w-[78px] text-right whitespace-nowrap"><span className="tracking-[-0.3px]">19:59</span><br />23-02-2025</div>
      </div>
    </footer>
  );
}

export default function App() {
  return (
    <div className="flex h-[1200px] w-[1920px] flex-col overflow-hidden bg-[#f3f3f3] font-['Noto_Sans',sans-serif] text-[#1b1b1b]">
      <header className="flex h-[62px] shrink-0 items-start justify-between">
        <div className="flex h-[61px] items-center pl-[22px]">
          <Svg w={16} h={15}><path d="M15.500 7.500H1M7.500 1 1 7.500 7.500 14" stroke="#333" strokeWidth="1.200" /></Svg>
          <span className="mb-0.5 ml-[25px] text-[15px] leading-5 tracking-[-0.3px]">Settings</span>
        </div>
        <div className="flex items-center gap-[45px] pt-[13px] pr-[23px]">
          <Svg w={12} h={12}><path d="M0 6.500h12" stroke="#111" strokeWidth="1" /></Svg>
          <Svg w={12} h={12}><rect x=".5" y="2.500" width="9" height="9" rx="1.500" stroke="#111" /><path d="M3 .5h6A2.500 2.500 0 0 1 11.500 3v6" stroke="#111" /></Svg>
          <Svg w={12} h={12}><path d="m.3.300 11.400 11.400M11.700.300.3 11.700" stroke="#111" strokeWidth="1.100" /></Svg>
        </div>
      </header>
      <div className="flex min-h-0 flex-1 pl-5">
        <div className="pt-2"><Sidebar /></div>
        <div className="pt-[9px]"><Content /></div>
      </div>
      <Taskbar />
    </div>
  );
}
